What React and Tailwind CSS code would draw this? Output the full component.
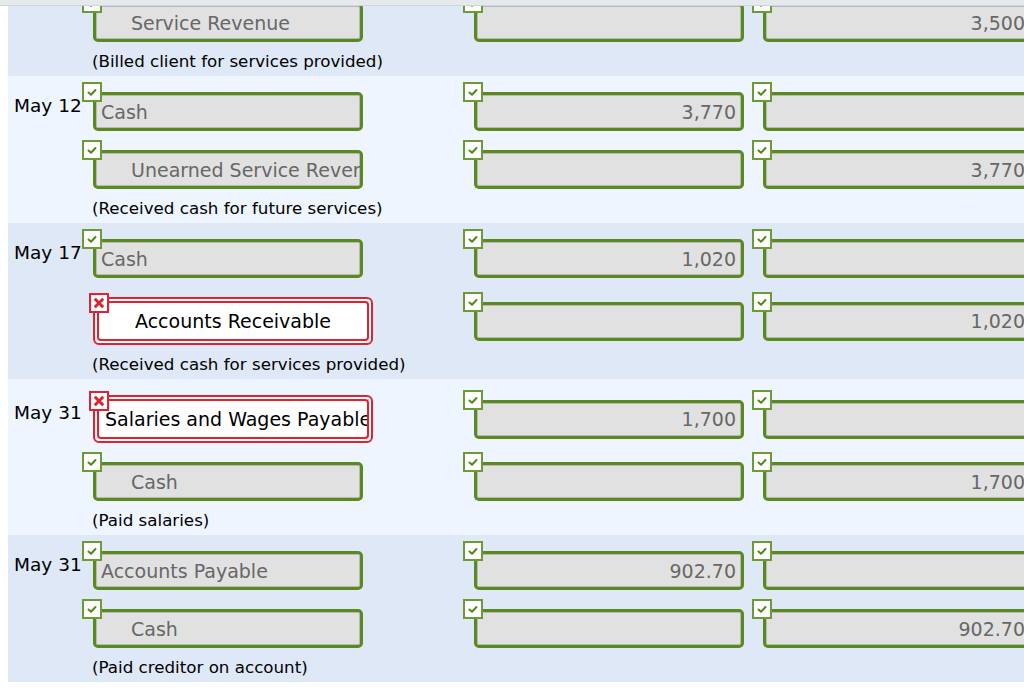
import React from "react";

const DARK = "bg-[#dee8f6]";
const LIGHT = "bg-[#eef5fe]";

function Check() {
  return (
    <div className="absolute -left-[11px] -top-[10px] z-10 w-[20px] h-[20px] bg-white border-2 border-[#6c9b35]">
      <svg width="16" height="16" viewBox="0 0 16 16" className="block">
        <polyline points="4.5,8.5 7,10.8 11.5,6" fill="none" stroke="#4f8a1a" strokeWidth="2" strokeLinecap="round" strokeLinejoin="round" />
      </svg>
    </div>
  );
}

function Cross() {
  return (
    <div className="absolute -left-[6px] -top-[6px] z-10 w-[20px] h-[20px] bg-white border-2 border-[#e3202e]">
      <svg width="16" height="16" viewBox="0 0 16 16" className="block">
        <path d="M4.8 4.8 L11.2 11.2 M11.2 4.8 L4.8 11.2" fill="none" stroke="#e3202e" strokeWidth="3" strokeLinecap="square" />
      </svg>
    </div>
  );
}

function GreenInput({ text, align = "left", indent = false }) {
  return (
    <div className="relative w-[270px] h-[39px]">
      <Check />
      <div
        className={
          "w-full h-full bg-[#e1e1e1] border-[3px] border-[#5a8a1e] rounded-[5px] shadow-[inset_0_0_0_1px_#b9b9b9] overflow-hidden whitespace-nowrap flex items-center pt-[1px] text-[19px] text-[#676767] " +
          (align === "right" ? "justify-end pr-[5px]" : indent ? "pl-[35px]" : "pl-[5px]")
        }
      >
        {text}
      </div>
    </div>
  );
}

function RedInput({ text, indent = false }) {
  return (
    <div className="relative w-[280px] h-[48px] bg-white border-2 border-[#e3202e] rounded-[6px] p-[2px]">
      <Cross />
      <div
        className={
          "w-full h-full bg-white border-2 border-[#e3202e] rounded-[4px] overflow-hidden whitespace-nowrap flex items-center text-[19px] text-black " +
          (indent ? "pl-[36px]" : "pl-[6px]")
        }
      >
        {text}
      </div>
    </div>
  );
}

function Row({ date, acct, indent, wrong, debit, credit, first }) {
  return (
    <div className={"flex items-center " + (wrong ? "h-[48px]" : "h-[39px]")}>
      <div className="w-[85px] shrink-0 pl-[6px] mb-[12px] text-[18.5px] text-black whitespace-nowrap">
        {first ? date : ""}
      </div>
      <div className="w-[381px] shrink-0">
        {wrong ? <RedInput text={acct} indent={indent} /> : <GreenInput text={acct} indent={indent} />}
      </div>
      <div className="w-[289px] shrink-0">
        <GreenInput text={debit} align="right" />
      </div>
      <div className="w-[270px] shrink-0">
        <GreenInput text={credit} align="right" />
      </div>
    </div>
  );
}

function Section({ bg, date, rows, memo, clip }) {
  return (
    <div className={bg + " w-[1100px] pb-[5px] " + (clip ? "overflow-hidden" : "pt-[16px]")}>
      <div className={"flex flex-col gap-[19px] " + (clip ? "-mt-[3px]" : "")}>
        {rows.map((r, i) => (
          <Row key={i} {...r} date={date} first={i === 0} />
        ))}
      </div>
      <div className="mt-[9px] h-[20px] pl-[84px] flex items-center pt-[1px] text-[16.7px] text-black whitespace-nowrap">
        {memo}
      </div>
    </div>
  );
}

const sections = [
  {
    bg: DARK,
    date: "",
    clip: true,
    rows: [{ acct: "Service Revenue", indent: true, debit: "", credit: "3,500" }],
    memo: "(Billed client for services provided)",
  },
  {
    bg: LIGHT,
    date: "May 12",
    rows: [
      { acct: "Cash", debit: "3,770", credit: "" },
      { acct: "Unearned Service Revenue", indent: true, debit: "", credit: "3,770" },
    ],
    memo: "(Received cash for future services)",
  },
  {
    bg: DARK,
    date: "May 17",
    rows: [
      { acct: "Cash", debit: "1,020", credit: "" },
      { acct: "Accounts Receivable", indent: true, wrong: true, debit: "", credit: "1,020" },
    ],
    memo: "(Received cash for services provided)",
  },
  {
    bg: LIGHT,
    date: "May 31",
    rows: [
      { acct: "Salaries and Wages Payable", wrong: true, debit: "1,700", credit: "" },
      { acct: "Cash", indent: true, debit: "", credit: "1,700" },
    ],
    memo: "(Paid salaries)",
  },
  {
    bg: DARK,
    date: "May 31",
    rows: [
      { acct: "Accounts Payable", debit: "902.70", credit: "" },
      { acct: "Cash", indent: true, debit: "", credit: "902.70" },
    ],
    memo: "(Paid creditor on account)",
  },
];

export default function App() {
  return (
    <div className="w-[1024px] h-[692px] overflow-hidden bg-white font-['DejaVu_Sans',sans-serif]">
      <div className="h-[6px] bg-[#e6e9ec] border-b border-[#cdd5df]" />
      <div className="pl-[8px]">
        {sections.map((s, i) => (
          <Section key={i} {...s} />
        ))}
      </div>
    </div>
  );
}
